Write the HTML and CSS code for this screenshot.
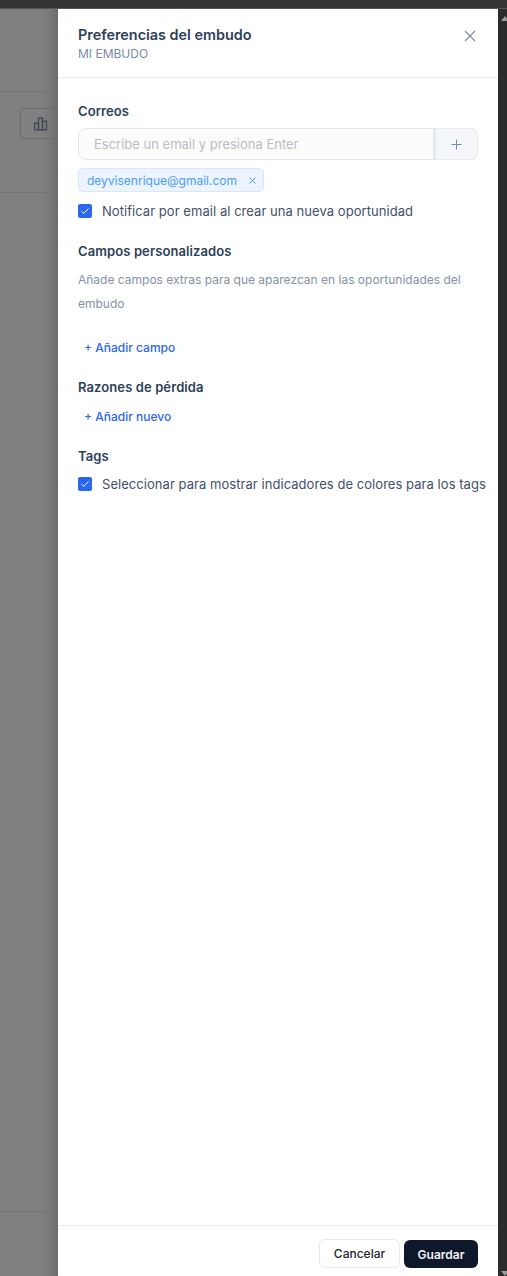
FILE: index.html
```html
<!doctype html>
<html lang="es">
  <head>
    <meta charset="utf-8">
    <title>Preferencias del embudo</title>
    <link rel="stylesheet" href="styles.css">
  </head>
  <body>
    <div class="topbar"></div>
    <div class="window">
      <div class="backdrop">
        <div class="bg-head"></div>
        <div class="bg-tools">
          <div class="bg-button">
            <svg width="14" height="14" viewBox="0 0 14 14" fill="none" stroke="#3f4650" stroke-width="1.3">
              <rect x="0.7" y="6.2" width="3.8" height="6.6"/>
              <rect x="4.5" y="1.2" width="4" height="11.6"/>
              <rect x="8.5" y="4.2" width="4" height="8.6"/>
            </svg>
          </div>
        </div>
        <div class="bg-body"></div>
        <div class="bg-foot"></div>
      </div>

      <div class="drawer">
        <header class="drawer-head">
          <div>
            <h1>Preferencias del embudo</h1>
            <p>MI EMBUDO</p>
          </div>
          <svg class="close" width="12" height="12" viewBox="0 0 12 12" stroke="#7b8ba3" stroke-width="1.1" fill="none">
            <path d="M1 1l10 10M11 1L1 11"/>
          </svg>
        </header>

        <main class="drawer-body">
          <h2 class="title-mail">Correos</h2>
          <div class="email-field">
            <div class="email-input">Escribe un email y presiona Enter</div>
            <div class="email-add">
              <svg width="11" height="11" viewBox="0 0 11 11" stroke="#7b8ba3" stroke-width="1" fill="none">
                <path d="M5.5 .5v10M.5 5.5h10"/>
              </svg>
            </div>
          </div>
          <span class="tag">deyvisenrique@gmail.com
            <svg width="7" height="7" viewBox="0 0 7 7" stroke="#4a9dfb" stroke-width="1" fill="none">
              <path d="M.5 .5l6 6M6.5 .5l-6 6"/>
            </svg>
          </span>
          <label class="check check-mail">
            <span class="box">
              <svg width="10" height="8" viewBox="0 0 10 8" stroke="#fff" stroke-width="1" fill="none">
                <path d="M1.5 4.2l2.3 2.2L8.5 1.5"/>
              </svg>
            </span>
            Notificar por email al crear una nueva oportunidad
          </label>

          <h2 class="title-fields">Campos personalizados</h2>
          <p class="hint">Añade campos extras para que aparezcan en las oportunidades del embudo</p>
          <a class="add add-field">+ Añadir campo</a>

          <h2 class="title-loss">Razones de pérdida</h2>
          <a class="add add-loss">+ Añadir nuevo</a>

          <h2 class="title-tags">Tags</h2>
          <label class="check check-tags">
            <span class="box">
              <svg width="10" height="8" viewBox="0 0 10 8" stroke="#fff" stroke-width="1" fill="none">
                <path d="M1.5 4.2l2.3 2.2L8.5 1.5"/>
              </svg>
            </span>
            Seleccionar para mostrar indicadores de colores para los tags
          </label>
        </main>

        <footer class="drawer-foot">
          <button class="btn btn-cancel">Cancelar</button>
          <button class="btn btn-save">Guardar</button>
        </footer>
      </div>

      <div class="scrollbar">
        <span class="arrow-up"></span>
        <span class="arrow-down"></span>
      </div>
    </div>
  </body>
</html>
```

FILE: styles.css
```css
* {
  box-sizing: border-box;
}

html, body {
  height: 100%;
  margin: 0;
}

body {
  display: flex;
  flex-direction: column;
  overflow: hidden;
  font-family: Inter, "Liberation Sans", sans-serif;
  background: #2b2b2b;
}

.topbar {
  height: 9px;
  flex: none;
  background: #333;
  border-bottom: 1px solid #555;
}

.window {
  flex: 1;
  display: flex;
  min-height: 0;
}

/* page dimmed behind the drawer */
.backdrop {
  width: 58px;
  flex: none;
  display: flex;
  flex-direction: column;
  background: #808080;
  box-shadow: inset -14px 0 14px -10px rgba(0, 0, 0, .22);
}

.bg-head {
  height: 83px;
  flex: none;
  border-bottom: 1px solid #747474;
}

.bg-tools {
  height: 101px;
  flex: none;
  padding: 16px 0 0 20px;
  border-bottom: 1px solid #747474;
}

.bg-button {
  height: 31px;
  display: flex;
  align-items: center;
  padding-left: 13px;
  border: 1px solid #6c6c6c;
  border-right: 0;
  border-radius: 4px 0 0 4px;
}

.bg-body {
  flex: 1;
}

.bg-foot {
  height: 65px;
  flex: none;
  border-top: 1px solid #747474;
}

.drawer {
  width: 440px;
  flex: none;
  display: flex;
  flex-direction: column;
  background: #fff;
}

.drawer-head {
  height: 69px;
  flex: none;
  display: flex;
  justify-content: space-between;
  padding: 17px 20px 0;
  border-bottom: 1px solid #e5e9f0;
}

.drawer-head h1 {
  margin: 0;
  font-size: 14.4px;
  line-height: 18px;
  font-weight: 600;
  color: #2d3f58;
}

.drawer-head p {
  margin: 2px 0 0;
  font-size: 12px;
  line-height: 16px;
  color: #7b8ba3;
}

.close {
  margin-top: 4px;
  margin-right: 2px;
}

.drawer-body {
  flex: 1;
  padding: 0 20px;
}

h2 {
  margin: 0;
  font-size: 13px;
  line-height: 18px;
  font-weight: 600;
  letter-spacing: .1px;
  color: #2d3f58;
}

.title-mail {
  margin-top: 24px;
}

.title-fields {
  margin-top: 22px;
}

.title-loss {
  margin-top: 21px;
}

.title-tags {
  margin-top: 21px;
}

.email-field {
  display: flex;
  height: 32px;
  margin-top: 8px;
}

.email-input {
  flex: 1;
  padding-left: 15px;
  font-size: 13px;
  line-height: 30px;
  color: #b9bcc2;
  background: #fcfcfd;
  border: 1px solid #e2e8f0;
  border-radius: 8px 0 0 8px;
}

.email-add {
  width: 44px;
  display: flex;
  align-items: center;
  justify-content: center;
  background: #f4f6fa;
  border: 1px solid #e6ebf2;
  border-left-width: 2px;
  border-radius: 0 6px 6px 0;
}

.tag {
  display: inline-flex;
  align-items: center;
  gap: 12px;
  height: 24px;
  margin-top: 8px;
  padding: 0 7px 0 8px;
  font-size: 12px;
  color: #4a9dfb;
  background: #ebf4ff;
  border: 1px solid #d5e8fd;
  border-radius: 5px;
}

.check {
  display: flex;
  align-items: center;
  gap: 10px;
  font-size: 13px;
  line-height: 18px;
  letter-spacing: .05px;
  white-space: nowrap;
  color: #3f506a;
}

.check-mail {
  margin-top: 10px;
}

.check-tags {
  margin-top: 10px;
}

.box {
  width: 14px;
  height: 14px;
  flex: none;
  display: flex;
  align-items: center;
  justify-content: center;
  background: #2b66f0;
  border-radius: 2px;
}

.hint {
  margin: 8px 0 0;
  font-size: 12px;
  line-height: 24px;
  color: #8492a6;
}

.add {
  display: block;
  padding-left: 6px;
  font-size: 12px;
  line-height: 18px;
  font-weight: 500;
  color: #2b66f0;
}

.add-field {
  margin-top: 23px;
}

.add-loss {
  margin-top: 12px;
}

.drawer-foot {
  height: 51px;
  flex: none;
  display: flex;
  justify-content: flex-end;
  gap: 4px;
  padding: 13px 20px 0;
  border-top: 1px solid #e5e9f0;
}

.btn {
  height: 29px;
  padding: 0;
  font-family: inherit;
  font-size: 12px;
  border-radius: 6px;
}

.btn-cancel {
  width: 81px;
  font-weight: 500;
  color: #1e2533;
  background: #fff;
  border: 1px solid #e5e9f0;
}

.btn-save {
  width: 74px;
  height: 28px;
  margin-top: 1px;
  font-weight: 600;
  color: #f2f4f7;
  background: #0f172a;
  border: 0;
}

.scrollbar {
  flex: 1;
  display: flex;
  flex-direction: column;
  justify-content: space-between;
  align-items: center;
  padding: 7px 0 0 3px;
  background: #2b2b2b;
}

.arrow-up {
  width: 0;
  height: 0;
  border: 4px solid transparent;
  border-top: 0;
  border-bottom: 5px solid #9a9a9a;
}

.arrow-down {
  width: 0;
  height: 0;
  border: 4px solid transparent;
  border-bottom: 0;
  border-top: 5px solid #9a9a9a;
}
```
